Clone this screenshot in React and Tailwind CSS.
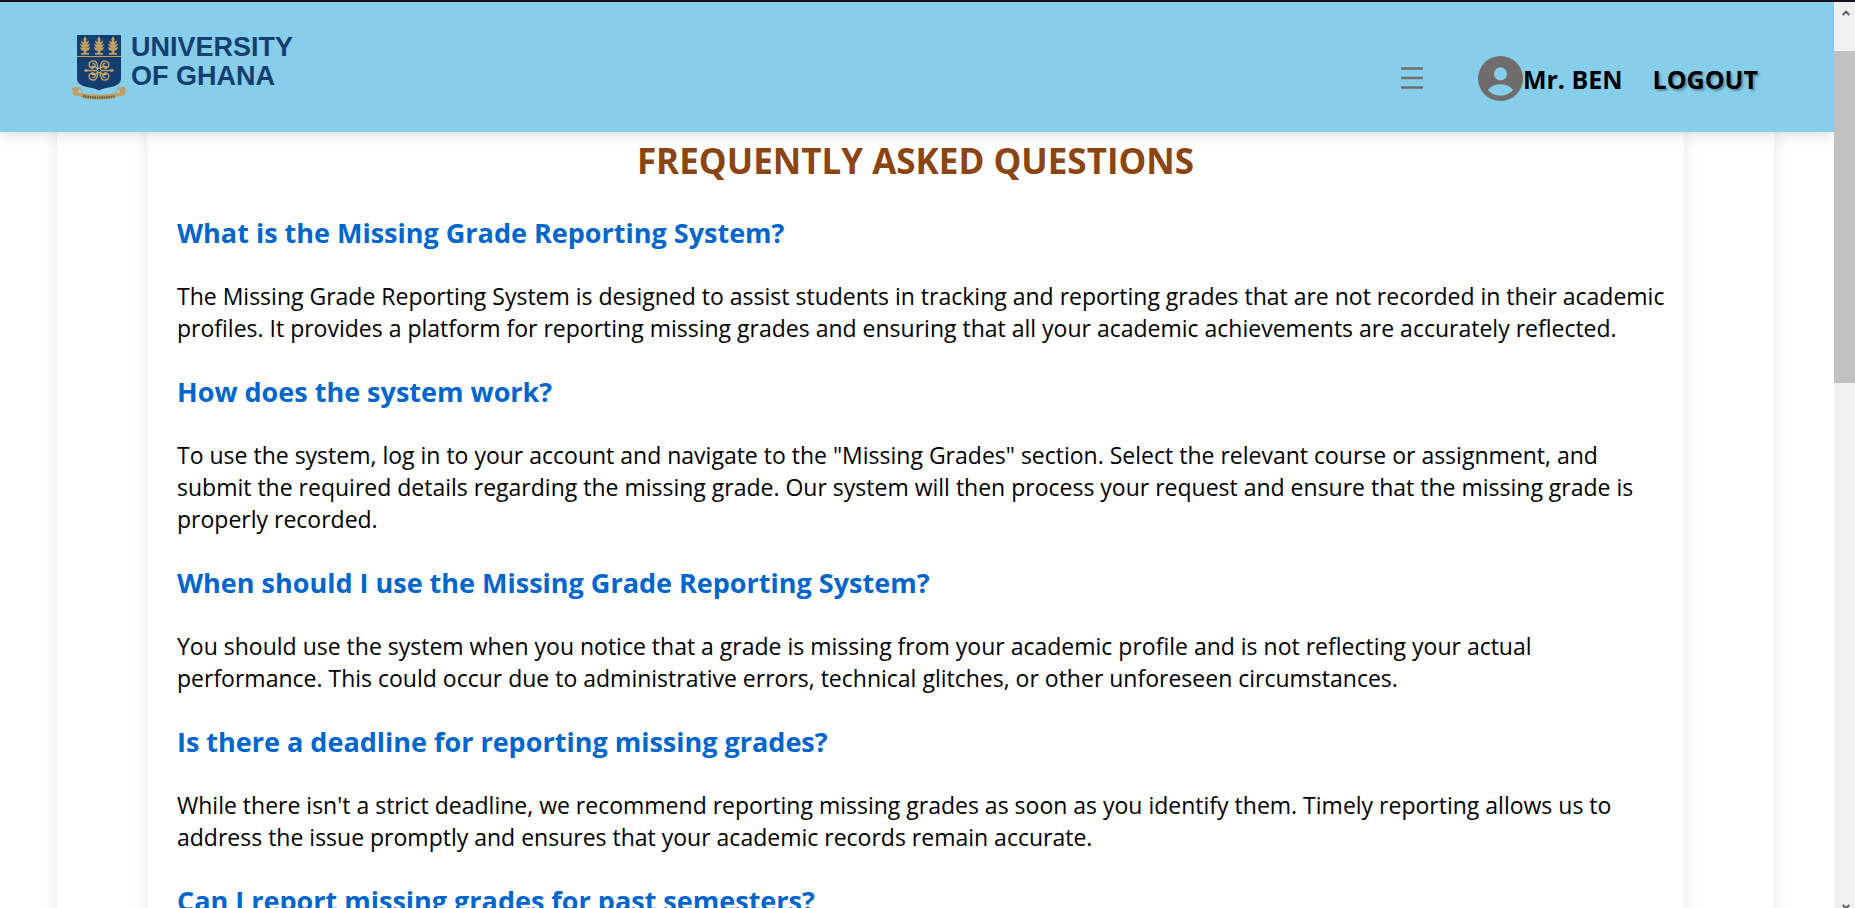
const faqs = [
  {
    question: "What is the Missing Grade Reporting System?",
    answer:
      "The Missing Grade Reporting System is designed to assist students in tracking and reporting grades that are not recorded in their academic profiles. It provides a platform for reporting missing grades and ensuring that all your academic achievements are accurately reflected.",
  },
  {
    question: "How does the system work?",
    answer:
      'To use the system, log in to your account and navigate to the "Missing Grades" section. Select the relevant course or assignment, and submit the required details regarding the missing grade. Our system will then process your request and ensure that the missing grade is properly recorded.',
  },
  {
    question: "When should I use the Missing Grade Reporting System?",
    answer:
      "You should use the system when you notice that a grade is missing from your academic profile and is not reflecting your actual performance. This could occur due to administrative errors, technical glitches, or other unforeseen circumstances.",
  },
  {
    question: "Is there a deadline for reporting missing grades?",
    answer:
      "While there isn't a strict deadline, we recommend reporting missing grades as soon as you identify them. Timely reporting allows us to address the issue promptly and ensures that your academic records remain accurate.",
  },
  { question: "Can I report missing grades for past semesters?" },
];

function Branch({ x }) {
  return (
    <path
      transform={`translate(${x} 0)`}
      d="M0 2 L1.6 5.2 L1.1 8.2 L4 6.6 L3.4 9 L1.6 10.8 L5 9.8 L3.8 12.6 L1.6 13.8 L5.4 13.2 L3.6 16.2 L1 17.2 L1.6 19 H4 V20.8 H-4 V19 H-1.6 L-1 17.2 L-3.6 16.2 L-5.4 13.2 L-1.6 13.8 L-3.8 12.6 L-5 9.8 L-1.6 10.8 L-3.4 9 L-4 6.6 L-1.1 8.2 L-1.6 5.2 Z"
    />
  );
}

const swirl = "M0.6 0.6 C2 3 4 4.6 6.4 4 C8 3.4 7.4 1.9 6 2.2 M1 1 C1.2 5 2 9.6 5.4 9.6 C8.4 9.6 10.4 7.6 9.8 5 C9.2 2.4 5.6 1.6 4.2 4 C3.2 6 4.8 7.4 6.4 6.8";

function Crest() {
  return (
    <svg viewBox="0 0 56 68" className="h-[68px] w-14" aria-hidden="true">
      <path d="M5 1h44v43c0 5-3 7-8 8.500-6 1.300-11 2.200-14 4-3-1.800-8-2.700-14-4-5-1.500-8-3.500-8-8.500z" fill="#153e70" />
      <g fill="#c09f62">
        <Branch x={13} />
        <Branch x={27} />
        <Branch x={41} />
        <path d="M5 22h44v1H5z" />
        <path d="M11.500 36.500l3-1.800 1 1h23l1-1 3 1.800-3 1.800-1-1h-23l-1 1z" />
      </g>
      <g transform="translate(27 36.5)" fill="none" stroke="#c9a868" strokeWidth="1.4">
        <path d={swirl} />
        <path d={swirl} transform="scale(-1 1)" />
        <path d={swirl} transform="scale(1 -1)" />
        <path d={swirl} transform="scale(-1 -1)" />
      </g>
      <path d="M27 34l2.500 2.500-2.500 2.500-2.500-2.500z" fill="#153e70" stroke="#c9a868" />
      <g fill="#c09f62">
        <path d="M0 54c3-2 6 0 9-.500v4c2-.500 1-2-1-2l-2 .500v3l3-.500v4c-3-.500-6 0-8-2z" />
        <path d="M54 54c-3-2-6 0-9-.500v4c-2-.500-1-2 1-2l2 .500v3l-3-.500v4c3-.500 6 0 8-2z" />
        <path d="M9 58.500c10 3 26 3 36 0v5c-10 3-26 3-36 0z" />
      </g>
      <path d="M11 62c10 2.200 22 2.200 32 0" fill="none" stroke="#66604f" strokeWidth="2.4" strokeDasharray="1.6 .7" />
    </svg>
  );
}

function AccountIcon() {
  return (
    <svg viewBox="2 2 20 20" className="size-[45px]" aria-hidden="true">
      <path
        fill="#716c6c"
        fillRule="evenodd"
        d="M12 2a10 10 0 1 0 0 20a10 10 0 0 0 0-20zM12 7a2.900 2.900 0 1 1 0 5.800a2.900 2.900 0 0 1 0-5.800zM6.400 17C8 15.200 9.900 14.500 12 14.500s4 .7 5.600 2.500C16.200 18.800 14.200 19.600 12 19.600S7.800 18.800 6.400 17z"
      />
    </svg>
  );
}

function Chevron({ down }) {
  return (
    <svg viewBox="0 0 8 6" className={down ? "h-1.5 w-2 rotate-180" : "h-1.5 w-2"} aria-hidden="true">
      <path d="M.7 5L4 1.700L7.300 5" fill="none" stroke="#606060" strokeWidth="2" />
    </svg>
  );
}

function Header() {
  return (
    <header className="relative z-10 flex h-[130px] shrink-0 items-start justify-between bg-[#87ceeb] pt-8 pr-[76px] pl-[72px] shadow-[0_0_15px_rgba(0,0,0,0.2)]">
      <a href="#home" className="flex gap-[3px] font-['Liberation_Sans',sans-serif] text-[27px] leading-[29px] font-bold text-[#153e70]">
        <Crest />
        <span className="-mt-px">
          UNIVERSITY
          <br />
          OF GHANA
        </span>
      </a>
      <nav className="flex items-center pt-[22px] text-[25px] leading-[34px] font-bold">
        <button type="button" aria-label="Open menu" className="mr-[55px] text-[#716c6c]">
          <svg viewBox="0 0 22 24" className="h-6 w-[22px]" aria-hidden="true">
            <path d="M0 1.500h22M0 11h22M0 20.500h22" stroke="currentColor" strokeWidth="2.400" />
          </svg>
        </button>
        <a href="#profile" className="mr-[30px] flex items-center">
          <AccountIcon />
          <span>Mr. BEN</span>
        </a>
        <button type="button" className="[text-shadow:2px_2px_2px_rgba(0,0,0,0.3)]">LOGOUT</button>
      </nav>
    </header>
  );
}

export default function App() {
  return (
    <div className="flex h-screen flex-col overflow-hidden bg-white font-['Open_Sans','Noto_Sans',sans-serif] text-black">
      <div className="h-0.5 shrink-0 bg-[#10101a]" />
      <div className="flex min-h-0 flex-1">
        <div className="flex min-w-0 flex-1 flex-col overflow-hidden">
          <Header />
          <main className="mr-[60px] ml-[57px] flex-1 px-[90px] shadow-[0_0_15px_rgba(0,0,0,0.1)]">
            <section className="h-full px-[30px] pt-1 shadow-[0_0_15px_rgba(0,0,0,0.1)]">
              <h1 className="mb-7 text-center text-[35px] leading-[50px] font-bold text-[#8b4513]">FREQUENTLY ASKED QUESTIONS</h1>
              {faqs.map(({ question, answer }) => (
                <article key={question} className="-mr-4 mb-[29px]">
                  <h2 className="mb-7 text-[27px] leading-[38px] font-bold text-[#0066cc]">{question}</h2>
                  {answer && <p className="text-[23px] leading-8">{answer}</p>}
                </article>
              ))}
            </section>
          </main>
        </div>
        <div className="flex w-[21px] shrink-0 flex-col items-center bg-[#f0f0f0]" aria-hidden="true">
          <div className="flex h-[49px] pt-2 pl-0.5">
            <Chevron />
          </div>
          <div className="h-[332px] w-full bg-[#c1c1c1]" />
          <div className="mt-auto -mb-0.5 pl-0.5">
            <Chevron down />
          </div>
        </div>
      </div>
    </div>
  );
}
